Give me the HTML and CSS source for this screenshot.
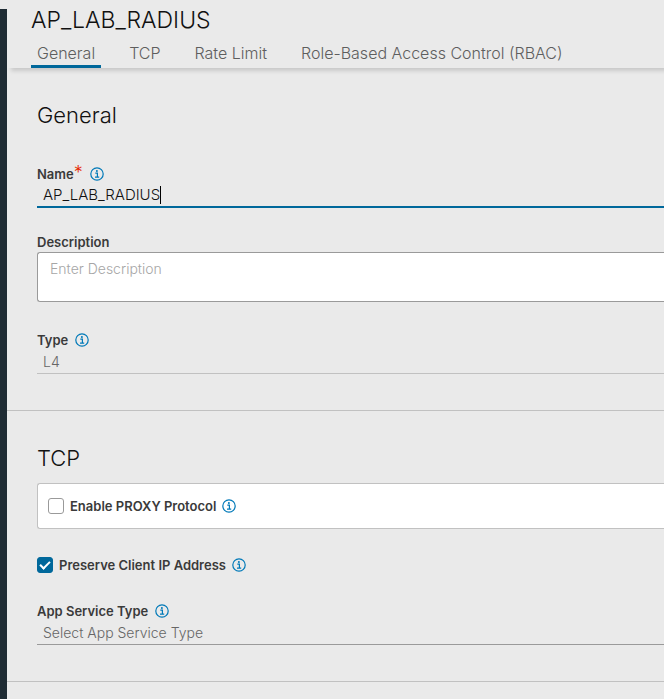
FILE: index.html
```html
<!DOCTYPE html>
<html lang="en">
<head>
<meta charset="utf-8">
<title>AP_LAB_RADIUS</title>
<link rel="stylesheet" href="styles.css">
</head>
<body>
<svg class="defs" aria-hidden="true">
  <symbol id="info" viewBox="0 0 14 14">
    <circle cx="7" cy="7" r="6.2" fill="none" stroke="currentColor" stroke-width="1.2"/>
    <circle cx="6.9" cy="3.9" r="1" fill="currentColor"/>
    <path d="M5.3 6.1H7.4V10M5 10.2H9.2" fill="none" stroke="currentColor" stroke-width="1.2"/>
  </symbol>
</svg>
<div class="rail"></div>
<main class="panel">
  <header class="header">
    <h1 class="title">AP_LAB_RADIUS</h1>
    <nav class="tabs">
      <a class="tab active" href="#general">General</a>
      <a class="tab" href="#tcp">TCP</a>
      <a class="tab" href="#rate">Rate Limit</a>
      <a class="tab" href="#rbac">Role-Based Access Control (RBAC)</a>
    </nav>
  </header>

  <section class="section" id="general">
    <h2 class="heading">General</h2>
    <div class="field name-field">
      <div class="label-row"><label for="name">Name<span class="required">*</span></label><svg class="info"><use href="#info"/></svg></div>
      <div class="line focused"><input class="control name-input" id="name" type="text" value="AP_LAB_RADIUS"><span class="caret"></span></div>
    </div>
    <div class="field description-field">
      <div class="label-row"><label for="description">Description</label></div>
      <textarea class="description" id="description" placeholder="Enter Description"></textarea>
    </div>
    <div class="field">
      <div class="label-row"><label for="type">Type</label><svg class="info"><use href="#info"/></svg></div>
      <div class="line disabled"><select class="control" id="type" disabled><option>L4</option></select></div>
    </div>
  </section>

  <section class="section" id="tcp">
    <h2 class="heading compact">TCP</h2>
    <div class="card check-row">
      <input class="check" type="checkbox" id="proxy"><label for="proxy">Enable PROXY Protocol</label><svg class="info"><use href="#info"/></svg>
    </div>
    <div class="check-row preserve">
      <input class="check" type="checkbox" id="preserve" checked><label for="preserve">Preserve Client IP Address</label><svg class="info"><use href="#info"/></svg>
    </div>
    <div class="field">
      <div class="label-row"><label for="service">App Service Type</label><svg class="info"><use href="#info"/></svg></div>
      <div class="line"><select class="control" id="service"><option>Select App Service Type</option></select></div>
    </div>
  </section>
</main>
</body>
</html>
```

FILE: styles.css
```css
* { box-sizing: border-box; }

body {
  margin: 0;
  min-height: 100vh;
  display: flex;
  background: #eaeaea;
  color: #3a3a3a;
  font-family: Inter, "Liberation Sans", sans-serif;
  font-size: 13px;
  overflow-x: hidden;
}

.defs { display: none; }

.rail {
  flex: 0 0 7px;
  margin-top: 9px;
  background: #1f2c34;
}

.panel { flex: 1; min-width: 0; }

.header {
  padding: 8px 0 0 24px;
  box-shadow: 4px 3px 4px rgba(0, 0, 0, 0.14);
}

.title {
  margin: 0;
  font-size: 23px;
  line-height: 24px;
  font-weight: 300;
  color: #111;
}

.tabs { display: flex; gap: 22px; }

.tab {
  height: 36px;
  padding: 0 6px;
  font-size: 16px;
  line-height: 42px;
  font-weight: 300;
  color: #5e5e5e;
  text-decoration: none;
  white-space: nowrap;
}

.tab.active { border-bottom: 3px solid #00689b; }

.section {
  padding: 35px 0 36px 30px;
  border-bottom: 1px solid #c1c1c1;
}

.heading {
  margin: 0 0 37px;
  font-size: 22px;
  line-height: 24px;
  font-weight: 300;
  color: #111;
}

.heading.compact { margin-bottom: 13px; }

.name-field { margin-bottom: 24px; }
.description-field { margin-bottom: 28px; }

.label-row, .check-row {
  display: flex;
  align-items: center;
  line-height: 20px;
  font-weight: 600;
}

.label-row { gap: 7px; }

.required {
  color: #e62700;
  font-size: 18px;
  font-weight: 300;
  line-height: 16px;
}

.info { width: 14px; height: 14px; color: #0079b8; }

.line {
  display: flex;
  align-items: center;
  height: 24px;
  padding-left: 6px;
  border-bottom: 1px solid #9a9a9a;
}

.line.focused { border-bottom: 2px solid #00689b; }
.line.disabled { border-color: #c1c1c1; }

.control {
  appearance: none;
  flex: 1;
  min-width: 0;
  height: 20px;
  padding: 0;
  border: 0;
  outline: 0;
  background: none;
  font: 300 14px/20px Inter, "Liberation Sans", sans-serif;
  color: #666;
  opacity: 1;
}

.name-input {
  flex: none;
  field-sizing: content;
  font-size: 15px;
  color: #111;
}

.caret { width: 1px; height: 18px; background: #000; }

.description {
  display: block;
  width: 100%;
  height: 50px;
  padding: 6px 12px;
  border: 1px solid #9a9a9a;
  border-right: 0;
  border-radius: 3px 0 0 3px;
  background: #fff;
  font: 300 14px/20px Inter, "Liberation Sans", sans-serif;
  resize: none;
}

.description::placeholder { color: #a6a6a6; }

.check-row { gap: 6px; }

.card {
  height: 46px;
  padding-left: 10px;
  border: 1px solid #c1c1c1;
  border-right: 0;
  border-radius: 3px 0 0 3px;
  background: #fff;
}

.preserve { margin: 26px 0; }

.check {
  appearance: none;
  width: 16px;
  height: 16px;
  margin: 0;
  border: 1px solid #9a9a9a;
  border-radius: 3px;
  background: #fff;
  display: grid;
  place-items: center;
}

.check:checked { border-color: #00689b; background: #00689b; }

.check:checked::before {
  content: "";
  width: 8px;
  height: 4px;
  margin-bottom: 2px;
  border: solid #fff;
  border-width: 0 0 2px 2px;
  transform: rotate(-45deg);
}
```
